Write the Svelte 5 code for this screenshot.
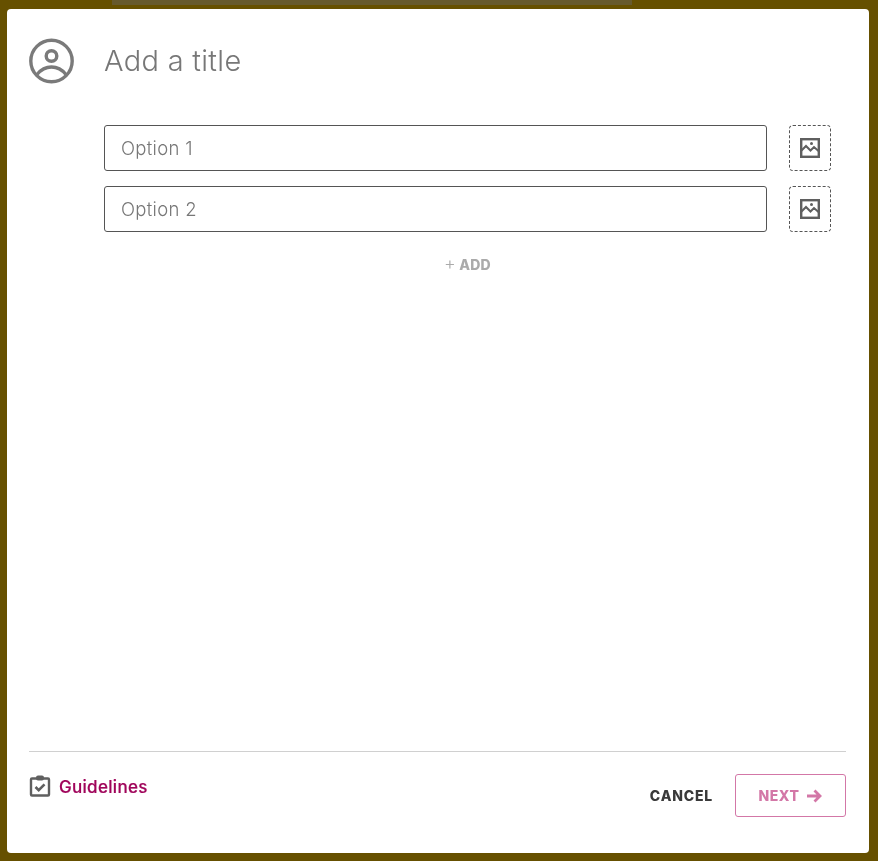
<script>
  const options = ['Option 1', 'Option 2'];
</script>

<div class="page">
  <div class="strip"></div>
  <div class="card">
    <header class="head">
      <svg class="avatar" width="46" height="46" viewBox="0 0 46 46" fill="none" stroke="#7a7a7a" stroke-width="3.4">
        <circle cx="22.500" cy="23" r="20.700" />
        <circle cx="22.500" cy="18" r="5.300" />
        <path d="M8 36.500C12 31.500 16.500 29 22.500 29s10.500 2.500 14.500 7.500" />
      </svg>
      <div class="title">Add a title</div>
    </header>

    <div class="options">
      {#each options as opt}
        <div class="row">
          <div class="input">{opt}</div>
          <button class="img-btn" aria-label="Add image">
            <svg width="20" height="20" viewBox="0 0 20 20" fill="none" stroke="#5f5f5f">
              <rect x="1.200" y="1.200" width="17.600" height="17.600" stroke-width="2.400" />
              <path d="M1.500 12.500 6 8l4.500 4.500L14 9l4.500 4" stroke-width="2" />
              <circle cx="11.500" cy="5.500" r="1.500" fill="#5f5f5f" stroke="none" />
            </svg>
          </button>
        </div>
      {/each}
      <div class="add"><span class="plus">+</span> ADD</div>
    </div>

    <footer class="foot">
      <div class="guidelines">
        <svg width="22" height="22" viewBox="0 0 22 22" fill="none" stroke="#5f5f5f">
          <rect x="2" y="3.500" width="18" height="17" rx="1" stroke-width="2.400" />
          <rect x="7" y="0.500" width="8" height="5" rx="2" fill="#5f5f5f" stroke="none" />
          <path d="M6.500 12l3.200 3.200 5.800-5.800" stroke-width="2.600" />
        </svg>
        <span>Guidelines</span>
      </div>
      <div class="actions">
        <button class="cancel">CANCEL</button>
        <button class="next">NEXT
          <svg width="16" height="14" viewBox="0 0 16 14" fill="none" stroke="#d377a7" stroke-width="2.800">
            <path d="M1 7h13M8.500 1.500 14 7l-5.500 5.500" />
          </svg>
        </button>
      </div>
    </footer>
  </div>
</div>

<style>
  :global(body) {
    margin: 0;
    background: #665000;
  }

  .page {
    height: 861px;
    overflow: hidden;
    padding: 0 9px 0 7px;
    box-sizing: border-box;
    font-family: Inter, "Noto Sans", sans-serif;
  }

  .strip {
    width: 520px;
    height: 5px;
    margin-left: 105px;
    background: #675a2d;
  }

  .card {
    height: 844px;
    margin-top: 4px;
    box-sizing: border-box;
    padding: 29px 23px 36px 22px;
    background: #fff;
    border-radius: 4px;
    display: flex;
    flex-direction: column;
    will-change: transform;
  }

  .head {
    display: flex;
    align-items: center;
    gap: 29px;
    height: 46px;
  }

  .avatar {
    flex: none;
  }

  .title {
    font-size: 29px;
    font-weight: 300;
    letter-spacing: 0.3px;
    margin-top: -2px;
    color: #777;
  }

  .options {
    flex: 1;
    padding: 41px 15px 0 75px;
    display: flex;
    flex-direction: column;
    gap: 15px;
  }

  .row {
    display: flex;
    align-items: flex-start;
    justify-content: space-between;
  }

  .input {
    width: 663px;
    height: 46px;
    box-sizing: border-box;
    padding-left: 16px;
    line-height: 45px;
    font-size: 18.500px;
    font-weight: 300;
    letter-spacing: 0.3px;
    color: #777;
    border: 1px solid #555;
    border-radius: 3px;
  }

  .img-btn {
    width: 42px;
    height: 46px;
    padding: 0;
    display: flex;
    align-items: center;
    justify-content: center;
    background: none;
    border: 1px dashed #555;
    border-radius: 4px;
  }

  .img-btn svg {
    margin-top: -1px;
  }

  .add {
    margin-top: 7px;
    height: 20px;
    line-height: 20px;
    text-align: center;
    font-size: 14px;
    font-weight: 800;
    letter-spacing: 0.2px;
    color: #aaa;
  }

  .plus {
    font-size: 18px;
    font-weight: 300;
  }

  .foot {
    border-top: 1px solid #d0d0d0;
    padding-top: 22px;
    display: flex;
    justify-content: space-between;
    align-items: flex-start;
  }

  .guidelines {
    display: flex;
    align-items: center;
    gap: 8px;
    font-size: 17px;
    font-weight: 500;
    letter-spacing: 0.3px;
    color: #a0055b;
    -webkit-text-stroke: 0.2px #a0055b;
  }

  .guidelines span {
    margin-top: 3px;
  }

  .actions {
    display: flex;
    align-items: center;
    gap: 22px;
  }

  button {
    font-family: inherit;
  }

  .cancel {
    padding: 0;
    background: none;
    border: none;
    font-size: 14px;
    font-weight: 800;
    letter-spacing: 0.8px;
    color: #3a3a3a;
  }

  .next {
    width: 111px;
    height: 43px;
    display: flex;
    align-items: center;
    justify-content: center;
    gap: 7px;
    background: #fff;
    border: 1px solid #d377a7;
    border-radius: 3px;
    font-size: 14px;
    font-weight: 800;
    letter-spacing: 0.5px;
    color: #d377a7;
  }
</style>
